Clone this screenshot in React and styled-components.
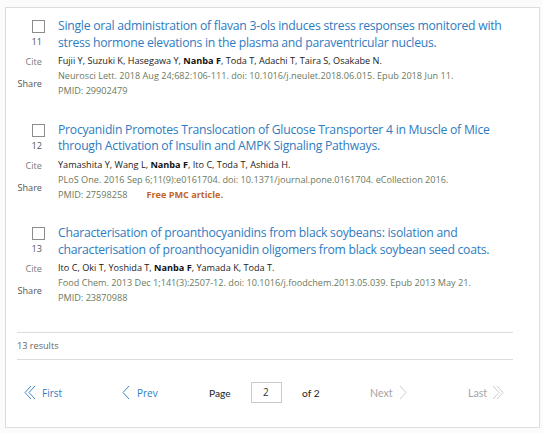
import React from 'react';
import styled, { createGlobalStyle } from 'styled-components';

const GlobalStyle = createGlobalStyle`
  html, body {
    margin: 0;
    background: #fbfbfb;
  }
  body {
    font-family: "Open Sans", "Noto Sans", sans-serif;
  }
`;

const Page = styled.div`
  padding: 7px 3px 6px 5px;
`;

const Panel = styled.div`
  background: #fff;
  border: 1px solid #dddddd;
  padding: 10px 26px 0 11px;
  height: 421px;
  box-sizing: border-box;
`;

const Entry = styled.div`
  display: grid;
  grid-template-columns: 28px 1fr;
  column-gap: 13px;
  height: 103.5px;
`;

const Side = styled.div`
  display: flex;
  flex-direction: column;
  align-items: flex-end;
  padding-top: 2px;
`;

const Check = styled.span`
  display: block;
  width: 11px;
  height: 11px;
  border: 1px solid #8c8c8c;
  background: #fff;
`;

const SideText = styled.span`
  font-size: 9.15px;
  line-height: 12px;
  color: ${p => p.$color};
  margin-top: ${p => p.$gap}px;
  margin-right: 3px;
`;

const Body = styled.div`
  min-width: 0;
`;

const Title = styled.a`
  display: block;
  font-size: 12.2px;
  letter-spacing: -0.25px;
  line-height: 16.5px;
  color: #2f7bbf;
  text-decoration: none;
  margin-bottom: 2px;
`;

const Line = styled.div`
  font-size: 9.15px;
  line-height: 15px;
  white-space: nowrap;
  color: ${p => p.$color || '#222'};

  b {
    font-weight: 700;
    color: #111;
  }
`;

const FreeTag = styled.span`
  color: #c2652b;
  font-weight: 700;
  margin-left: 19px;
`;

const Divider = styled.div`
  border-top: 1px solid #dcdcdc;
  margin-top: ${p => p.$top || 0}px;
`;

const Results = styled.div`
  font-size: 9.15px;
  line-height: 26px;
  color: #666;
`;

const Pager = styled.div`
  display: grid;
  grid-template-columns: 98px 87px 42px 51px 68px 98px 1fr;
  align-items: center;
  height: 65px;
  padding-left: 7px;
`;

const PageLink = styled.span`
  display: inline-flex;
  align-items: center;
  gap: ${p => p.$gap}px;
  font-size: ${p => (p.$disabled ? '10.6px' : '10px')};
  color: ${p => (p.$disabled ? '#a4a4a4' : '#2f7bbf')};
  font-family: ${p => (p.$disabled ? '"Lato", sans-serif' : '"Open Sans", sans-serif')};
`;

const Label = styled.span`
  font-family: "Lato", sans-serif;
  font-size: 10.2px;
  color: #222;
`;

const PageInput = styled.div`
  width: 31px;
  height: 21px;
  box-sizing: border-box;
  border: 1px solid #cacaca;
  font-size: 10px;
  line-height: 19px;
  padding-left: 11px;
  color: #333;
`;

const Chevron = ({ double, right, color }) => {
  const w = double ? 12 : 8;
  const left = ['M7 1 L1 7.5 L7 14', 'M11 1 L5 7.5 L11 14'];
  const rightPaths = ['M1 1 L7 7.5 L1 14', 'M5 1 L11 7.5 L5 14'];
  const paths = right ? rightPaths : left;
  return (
    <svg width={w} height="15" viewBox={`0 0 ${w} 15`} fill="none" stroke={color} strokeWidth="1">
      <path d={paths[0]} />
      {double && <path d={paths[1]} />}
    </svg>
  );
};

const entries = [
  {
    n: 11,
    title: 'Single oral administration of flavan 3-ols induces stress responses monitored with stress hormone elevations in the plasma and paraventricular nucleus.',
    pre: 'Fujii Y, Suzuki K, Hasegawa Y, ',
    post: ', Toda T, Adachi T, Taira S, Osakabe N.',
    journal: 'Neurosci Lett. 2018 Aug 24;682:106-111. doi: 10.1016/j.neulet.2018.06.015. Epub 2018 Jun 11.',
    pmid: '29902479',
  },
  {
    n: 12,
    title: 'Procyanidin Promotes Translocation of Glucose Transporter 4 in Muscle of Mice through Activation of Insulin and AMPK Signaling Pathways.',
    pre: 'Yamashita Y, Wang L, ',
    post: ', Ito C, Toda T, Ashida H.',
    journal: 'PLoS One. 2016 Sep 6;11(9):e0161704. doi: 10.1371/journal.pone.0161704. eCollection 2016.',
    pmid: '27598258',
    free: true,
  },
  {
    n: 13,
    title: 'Characterisation of proanthocyanidins from black soybeans: isolation and characterisation of proanthocyanidin oligomers from black soybean seed coats.',
    pre: 'Ito C, Oki T, Yoshida T, ',
    post: ', Yamada K, Toda T.',
    journal: 'Food Chem. 2013 Dec 1;141(3):2507-12. doi: 10.1016/j.foodchem.2013.05.039. Epub 2013 May 21.',
    pmid: '23870988',
  },
];

export default function App() {
  return (
    <Page>
      <GlobalStyle />
      <Panel>
        {entries.map(e => (
          <Entry key={e.n}>
            <Side>
              <Check />
              <SideText $color="#555" $gap={3}>{e.n}</SideText>
              <SideText $color="#7a7a7a" $gap={8}>Cite</SideText>
              <SideText $color="#555" $gap={10}>Share</SideText>
            </Side>
            <Body>
              <Title href="#">{e.title}</Title>
              <Line>
                {e.pre}<b>Nanba F</b>{e.post}
              </Line>
              <Line $color="#6b7a5e">{e.journal}</Line>
              <Line $color="#6b7a5e">
                PMID: {e.pmid}
                {e.free && <FreeTag>Free PMC article.</FreeTag>}
              </Line>
            </Body>
          </Entry>
        ))}
        <Divider $top={3.5} />
        <Results>13 results</Results>
        <Divider />
        <Pager>
          <PageLink $gap={6}><Chevron double color="#3f86c6" />First</PageLink>
          <PageLink $gap={7}><Chevron color="#3f86c6" />Prev</PageLink>
          <Label>Page</Label>
          <PageInput>2</PageInput>
          <Label>of 2</Label>
          <PageLink $disabled $gap={6}>Next<Chevron right color="#cdcdcd" /></PageLink>
          <PageLink $disabled $gap={5}>Last<Chevron right double color="#cdcdcd" /></PageLink>
        </Pager>
      </Panel>
    </Page>
  );
}
